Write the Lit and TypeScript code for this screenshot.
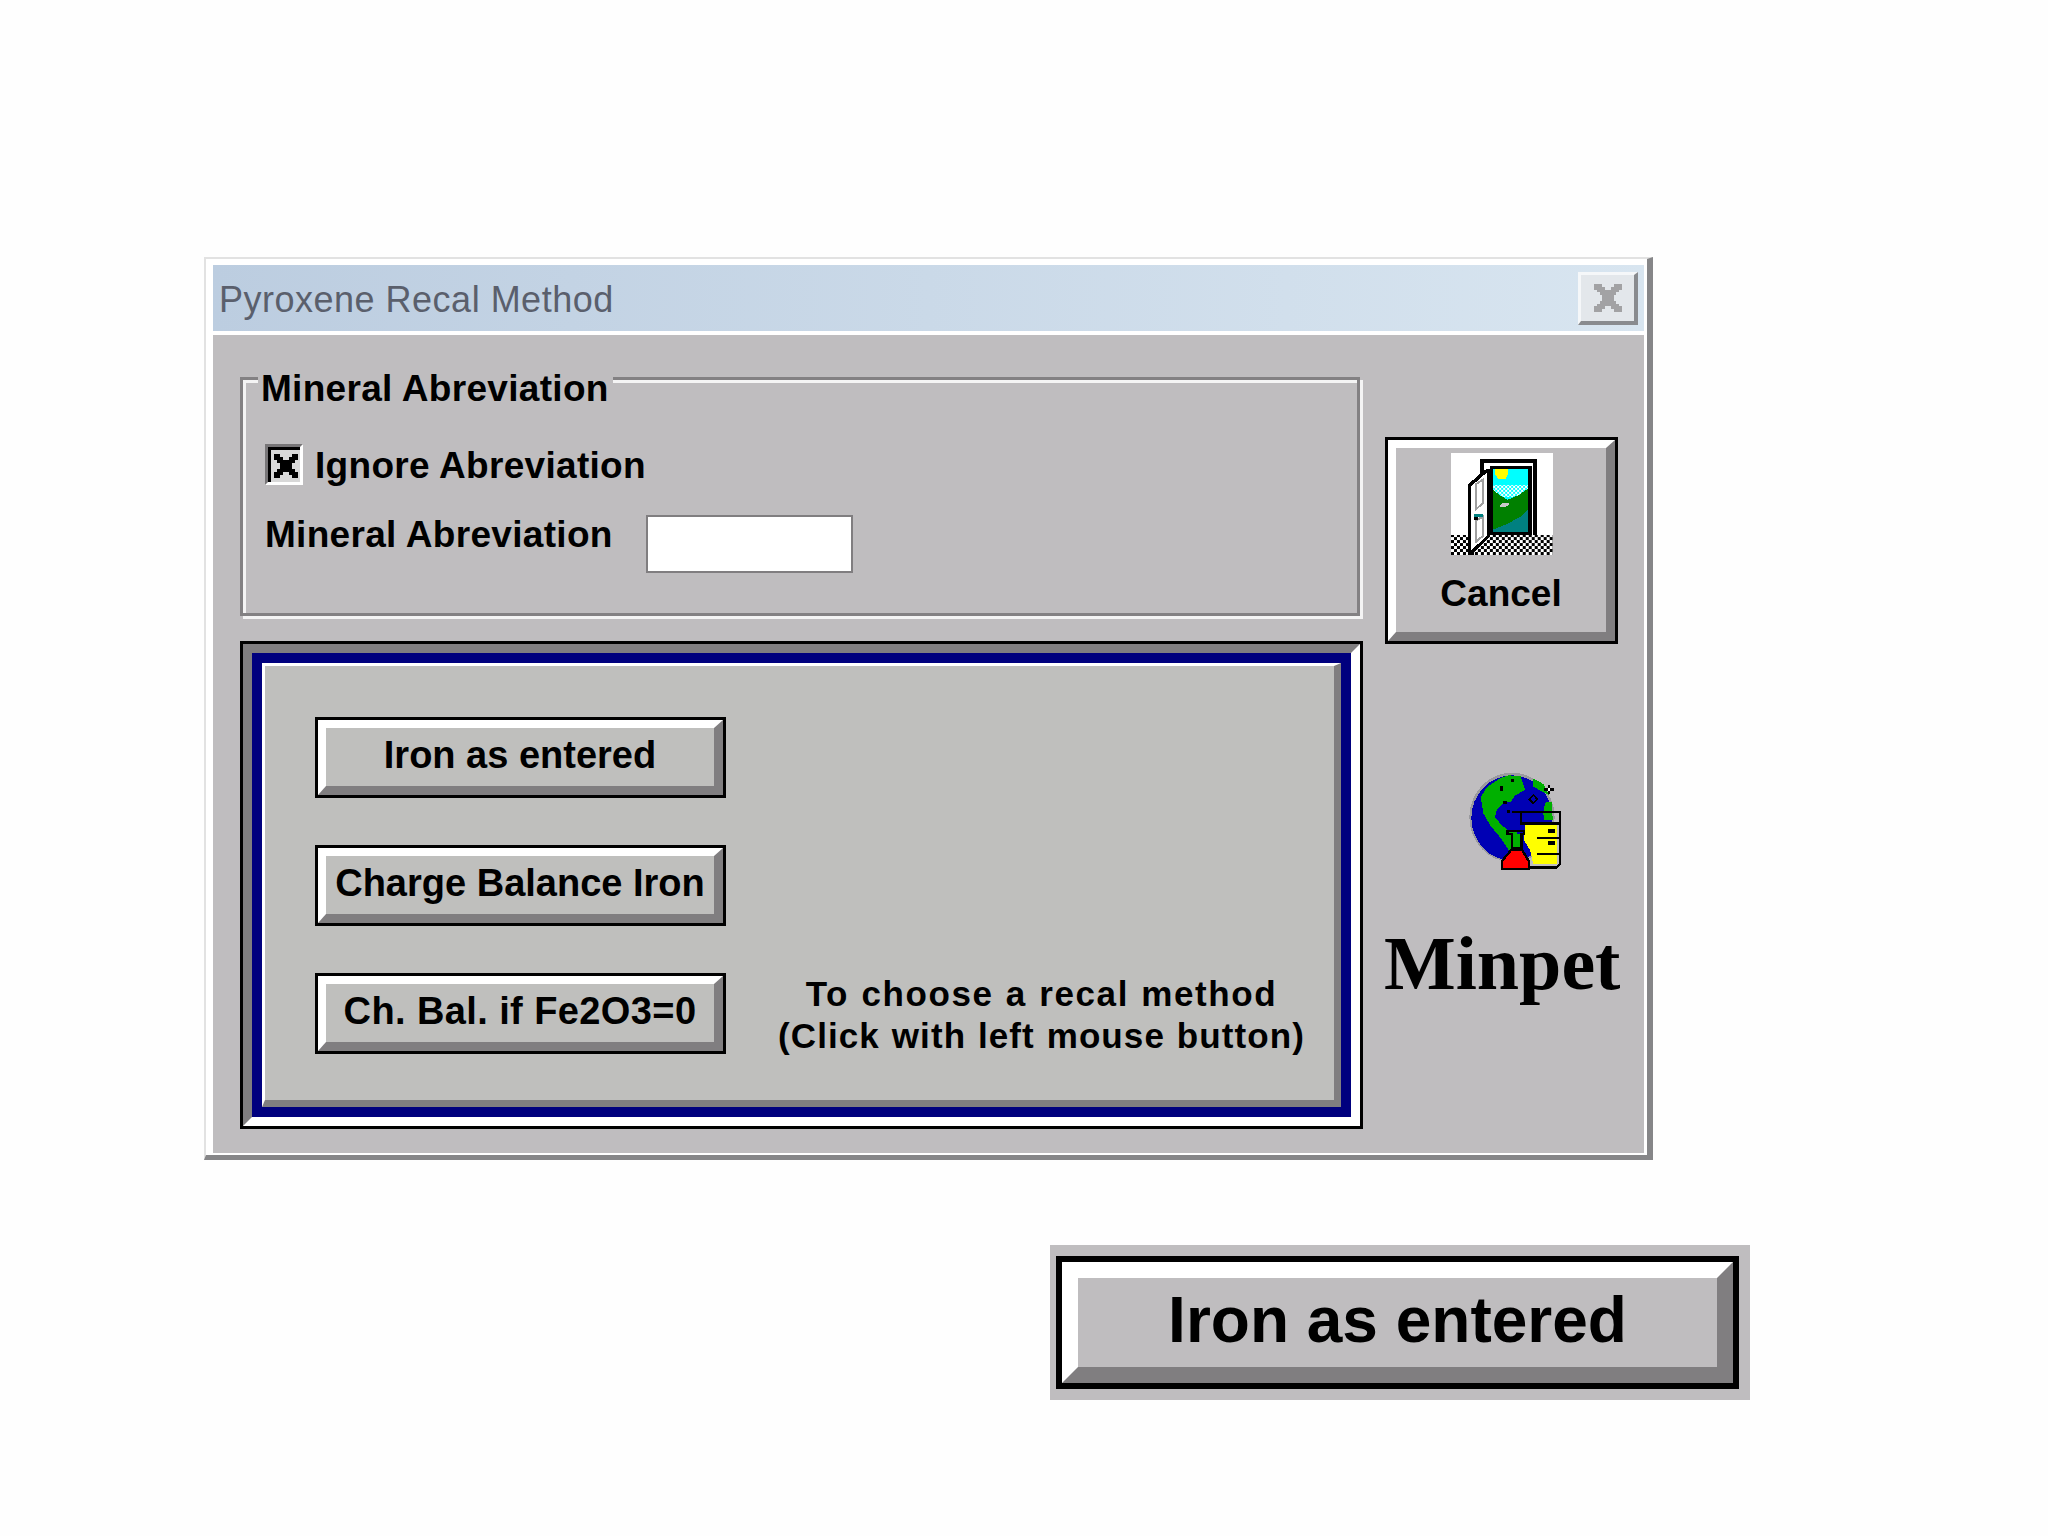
import { LitElement, html, css, svg } from "lit";
import { customElement } from "lit/decorators.js";

const door = svg`
<svg class="door" viewBox="5 10 307 305" shape-rendering="crispEdges" aria-hidden="true">
  <defs>
    <pattern id="chk" width="18" height="18" patternUnits="userSpaceOnUse" x="5" y="1">
      <rect width="18" height="18" fill="#fff"/>
      <rect width="9" height="9" fill="#000"/>
      <rect x="9" y="9" width="9" height="9" fill="#000"/>
    </pattern>
    <pattern id="dit" width="12" height="12" patternUnits="userSpaceOnUse">
      <rect width="12" height="12" fill="#00ffff"/>
      <rect width="6" height="6" fill="#fff"/>
      <rect x="6" y="6" width="6" height="6" fill="#fff"/>
    </pattern>
  </defs>
  <rect x="5" y="10" width="307" height="305" fill="#fff"/>
  <rect x="5" y="255" width="307" height="60" fill="url(#chk)"/>
  <rect x="93" y="28" width="172" height="228" fill="#000"/>
  <rect x="105" y="40" width="148" height="216" fill="#fff"/>
  <rect x="122" y="48" width="128" height="208" fill="#000"/>
  <rect x="130" y="58" width="108" height="190" fill="#00ffff"/>
  <path d="M137 58H178V70L168 88H148L137 72Z" fill="#ffff00"/>
  <path d="M130 105H238V125L215 140H155L130 120Z" fill="url(#dit)"/>
  <path d="M130 118L150 135L175 150L210 135L238 115V248H130Z" fill="#008000"/>
  <path d="M130 248V240L175 222L215 200L238 178V248Z" fill="#008080"/>
  <path d="M152 170L160 158H180V165L165 172Z" fill="#c8c8c8"/>
  <path d="M55 105L77 85L110 58H122V262L75 306V315H55Z" fill="#000"/>
  <path d="M65 110L84 93L113 68V258L66 302Z" fill="#fff"/>
  <path d="M80 103L102 88V160L80 178Z" fill="none" stroke="#a0a0a0" stroke-width="6"/>
  <path d="M80 212L102 200V258L80 276Z" fill="none" stroke="#a0a0a0" stroke-width="6"/>
  <rect x="75" y="193" width="25" height="9" fill="#008080"/>
  <rect x="75" y="202" width="10" height="8" fill="#000"/>
</svg>`;

const globe = svg`
<svg class="globe" viewBox="0 0 390 360" shape-rendering="crispEdges" aria-hidden="true">
  <ellipse cx="186" cy="172" rx="128" ry="134" fill="#9a9a9e"/>
  <ellipse cx="186" cy="174" rx="122" ry="128" fill="#0000b4"/>
  <path d="M92 112L110 82L150 55L175 46L212 48L220 72L226 90L195 106L184 124L160 130L140 150L135 172L155 195L175 212L200 215L210 240L180 275L150 232L120 195L100 160Z" fill="#00b000"/>
  <path d="M250 56L280 72L298 105L270 92L248 78Z" fill="#00b000"/>
  <path d="M285 128L306 125L308 180L282 180L280 158Z" fill="#00b000"/>
  <rect x="150" y="78" width="9" height="14" fill="#000"/>
  <rect x="182" y="58" width="9" height="9" fill="#000"/>
  <rect x="160" y="123" width="10" height="9" fill="#000"/>
  <rect x="170" y="150" width="10" height="10" fill="#000"/>
  <path d="M250 105L262 118L250 130L238 118Z" fill="none" stroke="#000" stroke-width="5"/>
  <path d="M297 74V102M283 88H311" stroke="#000" stroke-width="8"/>
  <rect x="293" y="84" width="8" height="8" fill="#fff"/>
  <path d="M225 192H322V312H250L240 270L222 240Z" fill="#ffff00"/>
  <path d="M185 155H330V312L320 322H235" fill="none" stroke="#000" stroke-width="7"/>
  <path d="M212 155V190H330" fill="none" stroke="#000" stroke-width="7"/>
  <rect x="294" y="206" width="22" height="12" fill="#000"/>
  <rect x="294" y="244" width="22" height="12" fill="#000"/>
  <rect x="262" y="230" width="64" height="7" fill="#000"/>
  <rect x="262" y="279" width="64" height="7" fill="#000"/>
  <path d="M186 222H214V262H186Z" fill="#00b000"/>
  <path d="M172 212H222V222H214V265H186V222H172Z" fill="none" stroke="#000" stroke-width="7"/>
  <path d="M185 268H215L236 303V326H156V303Z" fill="#ff0000" stroke="#000" stroke-width="7"/>
</svg>`;

@customElement("app-root")
export class AppRoot extends LitElement {
  static styles = css`
    :host {
      display: block;
      min-height: 1536px;
      background: #fefefe;
      font-family: "Liberation Sans", Arial, sans-serif;
      color: #000;
    }
    .page {
      display: flex;
      flex-direction: column;
      padding-top: 257px;
    }
    .window {
      box-sizing: border-box;
      width: 1449px;
      margin-left: 204px;
      display: flex;
      flex-direction: column;
      background: #fff;
      border-style: solid;
      border-width: 2px 6px 5px 2px;
      border-color: #e2e2e2 #868688 #868688 #e2e2e2;
      padding: 6px 3px 2px 7px;
    }
    .title {
      height: 66px;
      box-sizing: border-box;
      display: flex;
      align-items: center;
      justify-content: space-between;
      padding: 0 6px 0 6px;
      background: linear-gradient(90deg, #bccde0, #d8e5f0);
      color: #5a5f6c;
      font-size: 36px;
      letter-spacing: 0.5px;
    }
    .title-text {
      padding-top: 3px;
    }
    .close {
      box-sizing: border-box;
      width: 60px;
      height: 53px;
      display: flex;
      align-items: center;
      justify-content: center;
      padding: 0;
      background: #e3e7eb;
      border-style: solid;
      border-width: 3px 4px 4px 3px;
      border-color: #f5f7f9 #898b8f #898b8f #f5f7f9;
    }
    .close svg {
      width: 30px;
      height: 28px;
    }
    .body {
      margin-top: 4px;
      display: grid;
      grid-template-columns: 1123px 233px;
      column-gap: 22px;
      padding: 42px 25px 24px 27px;
      background: #bfbdbf;
    }
    .left {
      display: flex;
      flex-direction: column;
      gap: 25px;
    }
    .group {
      position: relative;
      box-sizing: border-box;
      width: 1120px;
      height: 239px;
      border: 3px solid #838183;
      box-shadow: inset 3px 3px 0 #f4f4f4, 3px 3px 0 #f4f4f4;
      padding: 64px 0 0 22px;
      display: flex;
      flex-direction: column;
      gap: 30px;
      font-weight: 700;
      font-size: 37px;
      letter-spacing: 0.3px;
    }
    .legend {
      position: absolute;
      left: 15px;
      top: -10px;
      padding: 0 4px 0 3px;
      line-height: 38px;
      background: #bfbdbf;
    }
    .check-row {
      display: flex;
      align-items: center;
      gap: 12px;
      height: 41px;
    }
    .check-label {
      padding-top: 2px;
    }
    .check {
      box-sizing: border-box;
      width: 38px;
      height: 41px;
      display: flex;
      border-style: solid;
      border-width: 3px;
      border-color: #777577 #fff #fff #777577;
      background: #d8d8d8;
    }
    .check-in {
      flex: 1;
      display: flex;
      align-items: center;
      justify-content: center;
      border-style: solid;
      border-width: 3px 0 0 3px;
      border-color: #000;
    }
    .check svg {
      width: 24px;
      height: 24px;
    }
    .field-row {
      display: flex;
      align-items: flex-start;
      gap: 33px;
      line-height: 40px;
    }
    .input {
      box-sizing: border-box;
      width: 207px;
      height: 58px;
      margin: 0;
      padding: 0;
      background: #fff;
      border: 2px solid #807e80;
      outline: none;
    }
    .panel {
      box-sizing: border-box;
      height: 488px;
      display: flex;
      border: 3px solid #000;
    }
    .panel-a {
      flex: 1;
      display: flex;
      border-style: solid;
      border-width: 9px;
      border-color: #807e80 #fff #fff #807e80;
    }
    .panel-b {
      flex: 1;
      display: flex;
      border: 10px solid #00007e;
    }
    .panel-c {
      flex: 1;
      display: flex;
      align-items: flex-start;
      gap: 52px;
      box-sizing: border-box;
      padding: 51px 0 0 50px;
      background: #bfbfbd;
      border-style: solid;
      border-width: 3px 7px 7px 3px;
      border-color: #fff #807e80 #807e80 #fff;
    }
    .buttons {
      display: flex;
      flex-direction: column;
      gap: 47px;
    }
    .btn {
      box-sizing: border-box;
      display: flex;
      padding: 0;
      margin: 0;
      background: #bfbfbd;
      border: 3px solid #000;
      font: inherit;
      color: inherit;
    }
    .face {
      flex: 1;
      display: flex;
      flex-direction: column;
      align-items: center;
      justify-content: center;
      white-space: nowrap;
      border-style: solid;
      border-width: 8px 9px 9px 8px;
      border-color: #fff #807e80 #807e80 #fff;
    }
    .small {
      width: 411px;
      height: 81px;
      font-weight: 700;
      font-size: 38px;
    }
    .small .face {
      padding-bottom: 4px;
    }
    .wide {
      letter-spacing: 0.4px;
    }
    .help {
      margin-top: 256px;
      display: flex;
      flex-direction: column;
      align-items: center;
      font-weight: 700;
      font-size: 35px;
      line-height: 42px;
      white-space: nowrap;
      letter-spacing: 1.1px;
      word-spacing: 1px;
    }
    .help-top {
      letter-spacing: 1.6px;
    }
    .right {
      display: flex;
      flex-direction: column;
      align-items: stretch;
    }
    .cancel {
      width: 233px;
      height: 207px;
      margin-top: 60px;
      font-weight: 700;
      font-size: 37px;
      background: #bfbdbf;
    }
    .cancel .face {
      justify-content: flex-start;
      padding-top: 5px;
      gap: 18px;
      line-height: 42px;
    }
    .door {
      width: 102px;
      height: 102px;
      display: block;
      margin-left: 2px;
    }
    .globe {
      width: 130px;
      height: 120px;
      display: block;
      margin: 116px 0 0 65px;
    }
    .minpet {
      margin-top: 39px;
      font-family: "Liberation Serif", "Times New Roman", serif;
      font-weight: 700;
      font-size: 76px;
      line-height: 88px;
      white-space: nowrap;
      margin-left: -1px;
    }
    .sample {
      margin: 85px 0 0 1050px;
      width: 700px;
      height: 155px;
      box-sizing: border-box;
      padding: 11px 11px 11px 6px;
      background: #bfbdbf;
      display: flex;
    }
    .big {
      flex: 1;
      border-width: 6px;
      background: #bfbdbf;
      font-weight: 700;
      font-size: 64px;
    }
    .big .face {
      border-width: 16px;
      padding-bottom: 5px;
    }
  `;

  render() {
    return html`
      <div class="page">
        <section class="window">
          <header class="title">
            <span class="title-text">Pyroxene Recal Method</span>
            <button class="close" aria-label="Close">
              <svg viewBox="0 0 10 10" shape-rendering="crispEdges" aria-hidden="true">
                <path fill="#a2a2a4" d="M0 0H3V1H4V2H6V1H7V0H10V2H9V3H8V4H7V6H8V7H9V8H10V10H7V9H6V8H4V9H3V10H0V8H1V7H2V6H3V4H2V3H1V2H0Z"/>
              </svg>
            </button>
          </header>
          <div class="body">
            <div class="left">
              <div class="group">
                <span class="legend">Mineral Abreviation</span>
                <div class="check-row">
                  <span class="check"><span class="check-in">
                    <svg viewBox="0 0 8 8" shape-rendering="crispEdges" aria-hidden="true">
                      <path fill="#000" d="M0 0H2V1H3V2H5V1H6V0H8V2H7V3H6V5H7V6H8V8H6V7H5V6H3V7H2V8H0V6H1V5H2V3H1V2H0Z"/>
                    </svg>
                  </span></span>
                  <span class="check-label">Ignore Abreviation</span>
                </div>
                <div class="field-row">
                  <span>Mineral Abreviation</span>
                  <input class="input" type="text" aria-label="Mineral Abreviation" />
                </div>
              </div>
              <div class="panel">
                <div class="panel-a">
                  <div class="panel-b">
                    <div class="panel-c">
                      <div class="buttons">
                        <button class="btn small"><span class="face">Iron as entered</span></button>
                        <button class="btn small"><span class="face">Charge Balance Iron</span></button>
                        <button class="btn small"><span class="face wide">Ch. Bal. if Fe2O3=0</span></button>
                      </div>
                      <div class="help">
                        <span class="help-top">To choose a recal method</span>
                        <span>(Click with left mouse button)</span>
                      </div>
                    </div>
                  </div>
                </div>
              </div>
            </div>
            <div class="right">
              <button class="btn cancel"><span class="face">${door}<span>Cancel</span></span></button>
              ${globe}
              <div class="minpet">Minpet</div>
            </div>
          </div>
        </section>
        <div class="sample">
          <button class="btn big"><span class="face">Iron as entered</span></button>
        </div>
      </div>
    `;
  }
}
